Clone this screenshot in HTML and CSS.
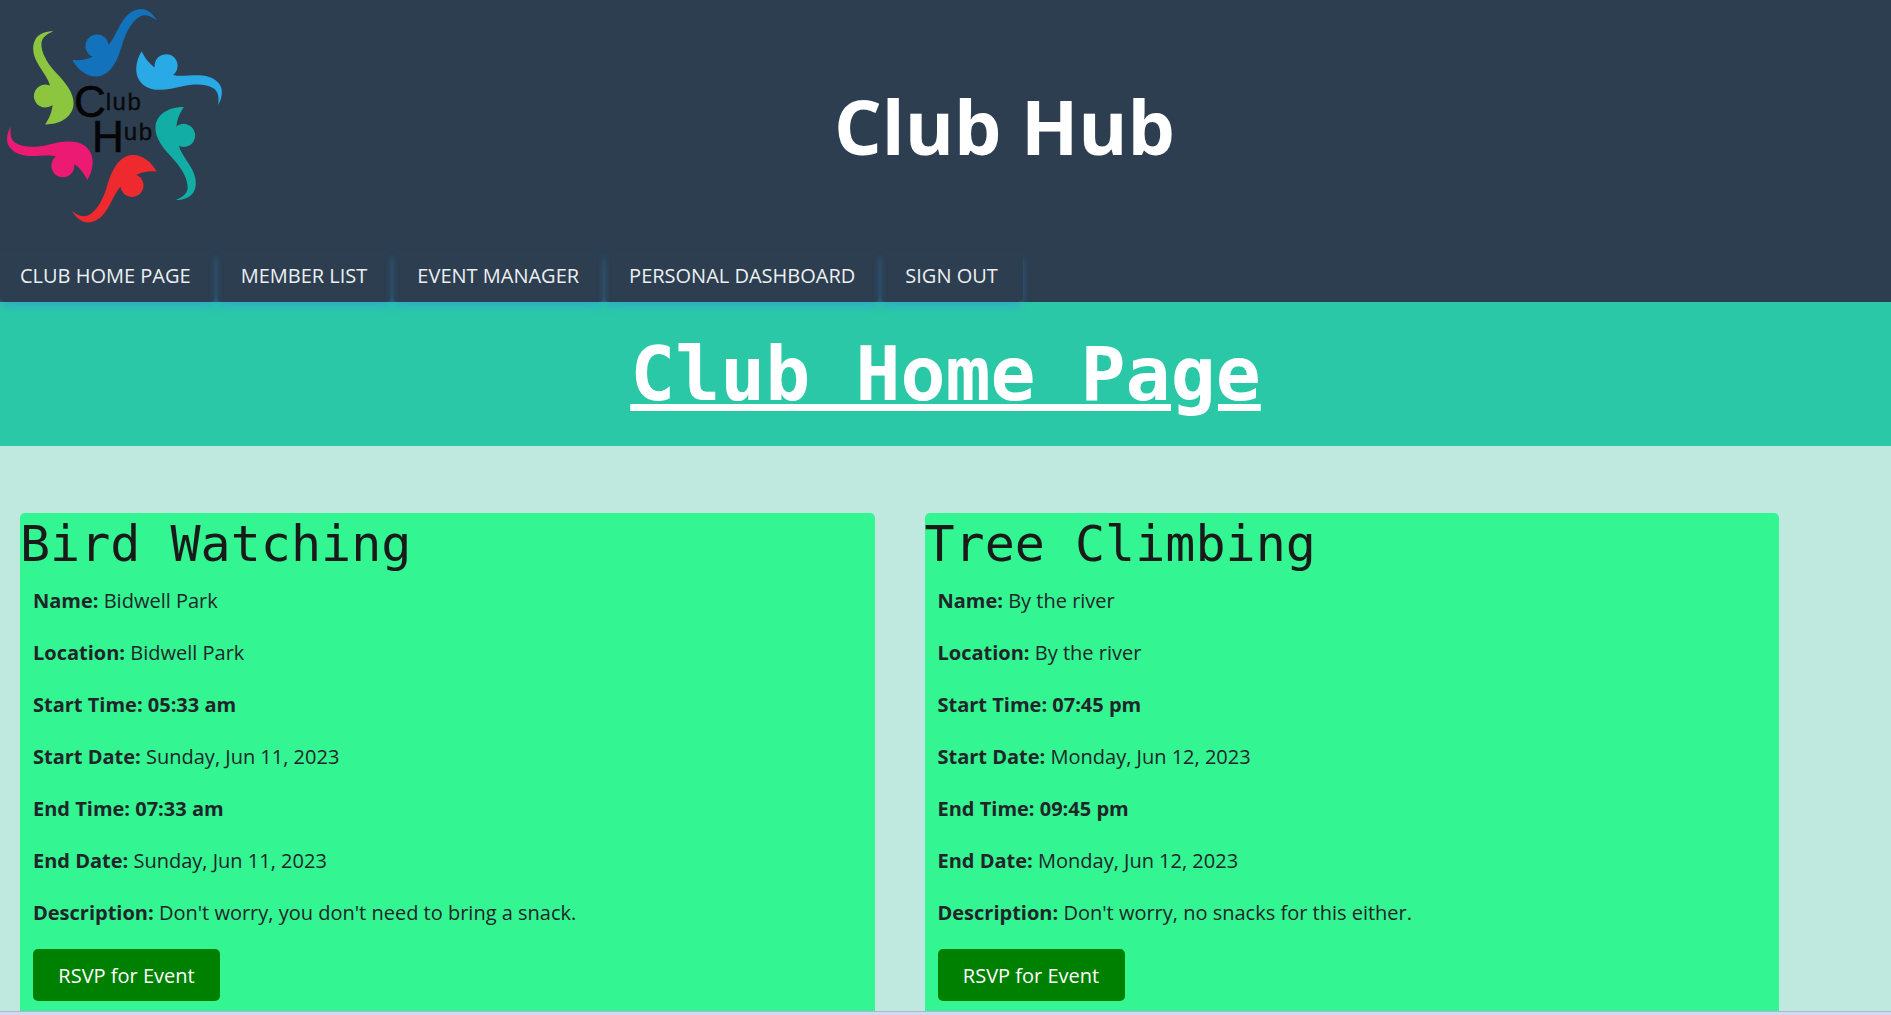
FILE: index.html
```html
<!DOCTYPE html>
<html lang="en">
<head>
    <meta charset="UTF-8">
    <meta name="viewport" content="width=device-width, initial-scale=1.0">
    <title>Club Hub</title>
    <link rel="stylesheet" href="styles.css">
</head>
<body>
    <header class="site-header">
        <div class="brand-row">
            <svg class="logo" viewBox="0 0 240 240" width="240" height="240" role="img" aria-label="Club Hub logo">
                <defs>
                    <!-- one swirl figure, turned six times round the middle -->
                    <g id="swirl">
                        <circle cx="97" cy="46" r="11.5"/>
                        <path d="M72.3 60 C79 60.5 87 60 94 56 L108 45 C113 41 117 30 122 22 C127 14 134 9 141 9 C148 9 154 15 157 20.5 C151 16 146 14 141 16 C133 20 127 30 123 42 C119 56 114 70 103 75 C91 80 79 72 72.3 60 Z"/>
                    </g>
                </defs>
                <use href="#swirl" fill="#1272bb"/>
                <use href="#swirl" fill="#29a9e5" transform="rotate(60 114.5 115.7)"/>
                <use href="#swirl" fill="#12ada5" transform="rotate(120 114.5 115.7)"/>
                <use href="#swirl" fill="#ee2a2f" transform="rotate(180 114.5 115.7)"/>
                <use href="#swirl" fill="#ed1a74" transform="rotate(240 114.5 115.7)"/>
                <use href="#swirl" fill="#8cc63f" transform="rotate(300 114.5 115.7)"/>
                <text class="logo-big" x="74" y="117">C<tspan class="logo-small" dy="-7">lub</tspan></text>
                <text class="logo-big" x="92" y="152">H<tspan class="logo-small" dy="-12">ub</tspan></text>
            </svg>
            <h1 class="site-title">Club Hub</h1>
        </div>
        <nav class="main-nav">
            <a href="#">CLUB HOME PAGE</a>
            <a href="#">MEMBER LIST</a>
            <a href="#">EVENT MANAGER</a>
            <a href="#">PERSONAL DASHBOARD</a>
            <a href="#">SIGN OUT</a>
        </nav>
    </header>

    <section class="page-banner">
        <h2>Club Home Page</h2>
    </section>

    <main class="events">
        <article class="event-card">
            <h3>Bird Watching</h3>
            <p><b>Name:</b> Bidwell Park</p>
            <p><b>Location:</b> Bidwell Park</p>
            <p><b>Start Time: 05:33 am</b></p>
            <p><b>Start Date:</b> Sunday, Jun 11, 2023</p>
            <p><b>End Time: 07:33 am</b></p>
            <p><b>End Date:</b> Sunday, Jun 11, 2023</p>
            <p><b>Description:</b> Don't worry, you don't need to bring a snack.</p>
            <button type="button">RSVP for Event</button>
        </article>
        <article class="event-card">
            <h3>Tree Climbing</h3>
            <p><b>Name:</b> By the river</p>
            <p><b>Location:</b> By the river</p>
            <p><b>Start Time: 07:45 pm</b></p>
            <p><b>Start Date:</b> Monday, Jun 12, 2023</p>
            <p><b>End Time: 09:45 pm</b></p>
            <p><b>End Date:</b> Monday, Jun 12, 2023</p>
            <p><b>Description:</b> Don't worry, no snacks for this either.</p>
            <button type="button">RSVP for Event</button>
        </article>
    </main>
    <div class="window-edge"></div>
</body>
</html>
```

FILE: styles.css
```css
html, body {
    height: 100%;
    margin: 0;
    padding: 0;
    overflow: hidden;
}

body {
    display: flex;
    flex-direction: column;
    background: #bfe9df;
    color: #212529;
    font-family: "Open Sans", sans-serif;
    font-size: 20px;
}

.site-header {
    position: relative; /* keeps the nav shadow above the banner */
    z-index: 1;
    background: #2c3e50;
    height: 302px;
    display: flex;
    flex-direction: column;
    flex-shrink: 0;
}

.brand-row {
    display: flex;
    height: 251px;
}

.logo {
    flex-shrink: 0;
}

.logo-big {
    font-family: "Liberation Sans", sans-serif;
    font-size: 44px;
    fill: #050505;
    stroke: #050505;
    stroke-width: 0.6px;
}

.logo-small {
    font-size: 24px;
    letter-spacing: 1.5px;
    fill: #0a0a0a;
    stroke-width: 0.3px;
}

.site-title {
    margin: 0;
    margin-left: 594px;
    padding-top: 77px;
    color: #fff;
    font-size: 75px;
    line-height: 98px;
    font-weight: 700;
}

.main-nav {
    display: flex;
    height: 51px;
}

.main-nav a {
    display: flex;
    align-items: center;
    padding: 0 25px 3px;
    color: #ecf0f1;
    font-size: 20px;
    text-decoration: none;
    border-radius: 0 0 5px 5px;
    box-shadow: 0 6px 8px -2px rgba(52, 152, 219, 0.6);
}

.main-nav a:first-child {
    padding-left: 20px;
}

.page-banner {
    background: #2bc8a8;
    height: 144px;
    flex-shrink: 0;
    display: flex;
    justify-content: center;
    align-items: center;
}

.page-banner h2 {
    margin: 0;
    color: #fff;
    font-family: "DejaVu Sans Mono", monospace;
    font-size: 74.8px;
    font-weight: 700;
    text-decoration: underline;
    text-decoration-thickness: 7px;
    text-underline-offset: 4px;
}

.events {
    flex: 1;
    display: flex;
    align-items: flex-start;
    gap: 50px;
    padding: 67px 0 0 20px;
    overflow: hidden;
}

.event-card {
    width: 854.5px;
    height: 520px;
    flex-shrink: 0;
    background: #33f592;
    border-radius: 5px;
}

.event-card h3 {
    margin: 0 0 13px;
    color: #1a1a1a;
    font-family: "DejaVu Sans Mono", monospace;
    font-size: 50px;
    font-weight: 400;
    line-height: 62px;
}

.event-card p {
    margin: 0 13px 26px;
    line-height: 26px;
}

.event-card button {
    display: block;
    margin-top: -3px;
    margin-left: 13px;
    width: 187px;
    height: 52px;
    background: #008000;
    color: #fff;
    border: none;
    border-radius: 5px;
    font-family: "Open Sans", sans-serif;
    font-size: 20px;
}

.window-edge {
    height: 4px;
    flex-shrink: 0;
    background: #d3d9f0;
    border-top: 1px solid #adb5d8;
    box-sizing: border-box;
}
```
